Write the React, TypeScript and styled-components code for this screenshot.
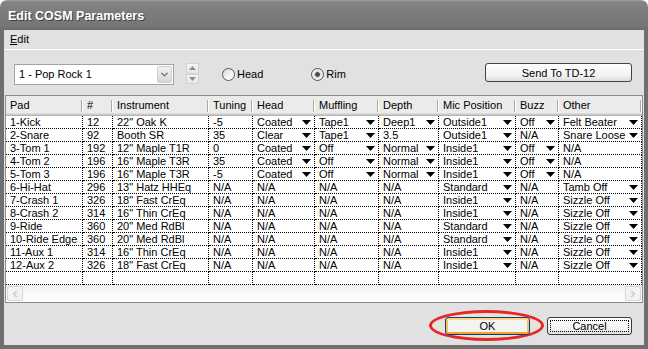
import React from 'react'
import styled, { createGlobalStyle } from 'styled-components'
import { ChevronDown, ChevronLeft, ChevronRight } from 'lucide-react'

const GlobalStyle = createGlobalStyle`
  html, body { margin: 0; padding: 0; background: #fff; }
  body {
    font-family: 'Liberation Sans', Arial, sans-serif;
    font-size: 11px;
    color: #000;
  }
  * { box-sizing: border-box; }
`

const COLS = [77, 30, 96, 44, 62, 64, 60, 77, 43, 83]
const TEMPLATE = COLS.map((c) => `${c}px`).join(' ')

const HEADERS = ['Pad', '#', 'Instrument', 'Tuning', 'Head', 'Muffling', 'Depth', 'Mic Position', 'Buzz', 'Other']

// a trailing * means the cell shows a drop-down arrow
const ROWS: string[][] = [
  ['1-Kick', '12', '22" Oak K', '-5', 'Coated*', 'Tape1*', 'Deep1*', 'Outside1*', 'Off*', 'Felt Beater*'],
  ['2-Snare', '92', 'Booth SR', '35', 'Clear*', 'Tape1*', '3.5', 'Outside1*', 'N/A', 'Snare Loose*'],
  ['3-Tom 1', '192', '12" Maple T1R', '0', 'Coated*', 'Off*', 'Normal*', 'Inside1*', 'Off*', 'N/A'],
  ['4-Tom 2', '196', '16" Maple T3R', '35', 'Coated*', 'Off*', 'Normal*', 'Inside1*', 'Off*', 'N/A'],
  ['5-Tom 3', '196', '16" Maple T3R', '-5', 'Coated*', 'Off*', 'Normal*', 'Inside1*', 'Off*', 'N/A'],
  ['6-Hi-Hat', '296', '13" Hatz HHEq', 'N/A', 'N/A', 'N/A', 'N/A', 'Standard*', 'N/A', 'Tamb Off*'],
  ['7-Crash 1', '326', '18" Fast CrEq', 'N/A', 'N/A', 'N/A', 'N/A', 'Inside1*', 'N/A', 'Sizzle Off*'],
  ['8-Crash 2', '314', '16" Thin CrEq', 'N/A', 'N/A', 'N/A', 'N/A', 'Inside1*', 'N/A', 'Sizzle Off*'],
  ['9-Ride', '360', '20" Med RdBl', 'N/A', 'N/A', 'N/A', 'N/A', 'Standard*', 'N/A', 'Sizzle Off*'],
  ['10-Ride Edge', '360', '20" Med RdBl', 'N/A', 'N/A', 'N/A', 'N/A', 'Standard*', 'N/A', 'Sizzle Off*'],
  ['11-Aux 1', '314', '16" Thin CrEq', 'N/A', 'N/A', 'N/A', 'N/A', 'Inside1*', 'N/A', 'Sizzle Off*'],
  ['12-Aux 2', '326', '18" Fast CrEq', 'N/A', 'N/A', 'N/A', 'N/A', 'Inside1*', 'N/A', 'Sizzle Off*'],
  ['', '', '', '', '', '', '', '', '', ''],
]

const DropArrow = () => (
  <svg width="9" height="5" viewBox="0 0 9 5">
    <polygon points="0,0 9,0 4.5,5" fill="#000" />
  </svg>
)

const Triangle = ({ up }: { up?: boolean }) => (
  <svg width="7" height="4" viewBox="0 0 7 4">
    <polygon points={up ? '0,4 7,4 3.5,0' : '0,0 7,0 3.5,4'} fill="#8c8c8c" />
  </svg>
)

const App = () => {
  return (
    <>
      <GlobalStyle />
      <Window>
        <TitleBar>Edit COSM Parameters</TitleBar>
        <Body>
          <MenuBar>
            <MenuItem>
              <u>E</u>dit
            </MenuItem>
          </MenuBar>

          <Toolbar>
            <Combo>
              <ComboText>1 - Pop Rock 1</ComboText>
              <ComboButton>
                <ChevronDown size={11} strokeWidth={3} color="#6a6a6a" />
              </ComboButton>
            </Combo>
            <Spin>
              <SpinHalf>
                <Triangle up />
              </SpinHalf>
              <SpinHalf>
                <Triangle />
              </SpinHalf>
            </Spin>
            <Radio $gap={23}>
              <RadioCircle />
              Head
            </Radio>
            <Radio $gap={48}>
              <RadioCircle $checked />
              Rim
            </Radio>
            <SendButton>Send To TD-12</SendButton>
          </Toolbar>

          <Grid>
            <HeaderRow>
              {HEADERS.map((h) => (
                <HeaderCell key={h}>{h}</HeaderCell>
              ))}
            </HeaderRow>
            {ROWS.map((row, i) => (
              <Row key={i}>
                {row.map((cell, j) => {
                  const arrow = cell.endsWith('*')
                  return (
                    <Cell key={j}>
                      <span>{arrow ? cell.slice(0, -1) : cell}</span>
                      {arrow && <DropArrow />}
                    </Cell>
                  )
                })}
              </Row>
            ))}
            <ScrollBar>
              <ScrollButton>
                <ChevronLeft size={10} strokeWidth={3.5} color="#c6c6c6" />
              </ScrollButton>
              <ScrollButton>
                <ChevronRight size={10} strokeWidth={3.5} color="#c6c6c6" />
              </ScrollButton>
            </ScrollBar>
          </Grid>

          <Footer>
            <Highlight />
            <DefaultButton>OK</DefaultButton>
            <PlainButton>Cancel</PlainButton>
          </Footer>
        </Body>
      </Window>
    </>
  )
}

export default App

const Window = styled.div`
  width: 648px;
  height: 349px;
  display: flex;
  flex-direction: column;
  border-radius: 7px 7px 0 0;
  overflow: hidden;
`

const TitleBar = styled.div`
  height: 30px;
  flex: none;
  display: flex;
  align-items: center;
  padding: 2px 0 0 8px;
  background: linear-gradient(#a2a2a2 0, #858585 2px, #7c7c7c 40%, #767676 85%, #6c6c6c 100%);
  color: #fff;
  font-weight: bold;
  font-size: 12.5px;
  text-shadow: 1px 1px 0 #3e3e3e;
`

const Body = styled.div`
  flex: 1;
  display: flex;
  flex-direction: column;
  background: #e1e1e1;
  border-left: 4px solid #6f6f6f;
  border-right: 4px solid #6f6f6f;
  border-bottom: 4px solid #6f6f6f;
`

const MenuBar = styled.div`
  height: 20px;
  flex: none;
  display: flex;
  align-items: center;
  padding-left: 6px;
  border-bottom: 1px solid #fff;
`

const MenuItem = styled.span`
  line-height: 19px;
`

const Toolbar = styled.div`
  height: 45px;
  flex: none;
  display: flex;
  align-items: center;
  padding: 3px 12px 0 10px;
`

const Combo = styled.div`
  width: 160px;
  height: 21px;
  display: flex;
  align-items: center;
  justify-content: space-between;
  background: #fff;
  border: 1px solid #a3a3a3;
  padding: 1px;
`

const ComboText = styled.span`
  padding-left: 3px;
`

const ComboButton = styled.div`
  width: 15px;
  height: 17px;
  display: flex;
  align-items: center;
  justify-content: center;
  background: linear-gradient(#f2f2f2, #d8d8d8);
  border: 1px solid #cfcfcf;
  border-radius: 2px;
`

const Spin = styled.div`
  margin-left: 12px;
  width: 13px;
  height: 21px;
  display: flex;
  flex-direction: column;
  margin-bottom: 1px;
`

const SpinHalf = styled.div`
  flex: 1;
  display: flex;
  align-items: center;
  justify-content: center;
  background: linear-gradient(#f6f6f6, #e6e6e6);
  border: 1px solid #d2d2d2;
`

const Radio = styled.label<{ $gap: number }>`
  margin-left: ${({ $gap }) => $gap}px;
  display: flex;
  align-items: center;
  gap: 2px;
`

const RadioCircle = styled.span<{ $checked?: boolean }>`
  width: 13px;
  height: 13px;
  border-radius: 50%;
  border: 1px solid #555;
  background: ${({ $checked }) =>
    $checked
      ? 'radial-gradient(circle, #4a4a4a 0 2px, #bdbdbd 2.5px, #eaeaea 3.5px, #f7f7f7 100%)'
      : 'linear-gradient(135deg, #d8d8d8, #fbfbfb 70%)'};
`

const SendButton = styled.div`
  margin-left: auto;
  margin-bottom: 3px;
  width: 147px;
  height: 19px;
  display: flex;
  align-items: center;
  justify-content: center;
  border: 1px solid #424242;
  border-radius: 3px;
  background: linear-gradient(#fefefe, #f2f2f2 70%, #dcdcdc);
`

const Grid = styled.div`
  height: 208px;
  flex: none;
  margin: 0 1px;
  display: flex;
  flex-direction: column;
  background: #fff;
  border: 1px solid #8e8e8e;
`

const HeaderRow = styled.div`
  height: 20px;
  display: grid;
  grid-template-columns: ${TEMPLATE};
  background: #ebebeb;
  box-shadow: inset 0 -1px #b4b4b4, inset 0 -2px #cbcbcb, inset 0 -3px #dcdcdc;
`

const HeaderCell = styled.div`
  position: relative;
  padding: 0 0 3px 4px;
  display: flex;
  align-items: center;
  &::after {
    content: '';
    position: absolute;
    right: 1px;
    top: 4px;
    width: 1px;
    height: 12px;
    background: #a9a9a9;
    box-shadow: 1px 0 #fff;
  }
`

const Row = styled.div`
  height: 13px;
  display: grid;
  grid-template-columns: ${TEMPLATE};
`

const Cell = styled.div`
  display: flex;
  align-items: center;
  justify-content: space-between;
  padding: 0 3px 0 4px;
  line-height: 12px;
  white-space: nowrap;
  border-right: 1px dotted #000;
  border-bottom: 1px dotted #000;
  svg {
    flex: none;
  }
`

const ScrollBar = styled.div`
  flex: 1;
  display: flex;
  align-items: center;
  justify-content: space-between;
  padding: 0 1px 0 1px;
  background: linear-gradient(#ededed, #f8f8f8 40%, #fdfdfd);
`

const ScrollButton = styled.div`
  width: 16px;
  height: 15px;
  display: flex;
  align-items: center;
  justify-content: center;
  border: 1px solid #d6d6d6;
  border-radius: 2px;
  background: #f3f3f3;
`

const Footer = styled.div`
  position: relative;
  flex: 1;
  display: flex;
  align-items: flex-start;
  justify-content: flex-end;
  gap: 17px;
  padding: 14px 12px 0 0;
`

const Highlight = styled.span`
  position: absolute;
  left: 425px;
  top: 7px;
  width: 115px;
  height: 31px;
  border: 3px solid #e8262a;
  border-radius: 50%;
  background: #e6e3d9;
`

const ButtonBase = styled.div`
  position: relative;
  width: 85px;
  height: 18px;
  display: flex;
  align-items: center;
  justify-content: center;
  border-radius: 3px;
`

const DefaultButton = styled(ButtonBase)`
  border: 1px solid #0b3d78;
  background: #f3f3ef;
  box-shadow: inset 0 2px #ffd48a, inset 0 -2px #eea33c, inset 2px 0 #f6bf62, inset -2px 0 #f6bf62;
`

const PlainButton = styled(ButtonBase)`
  border: 1px solid #3a3a3a;
  background: linear-gradient(#fefefe, #f3f3f3 70%, #dedede);
  &::after {
    content: '';
    position: absolute;
    inset: 2px;
    border: 1px dotted #000;
  }
`
